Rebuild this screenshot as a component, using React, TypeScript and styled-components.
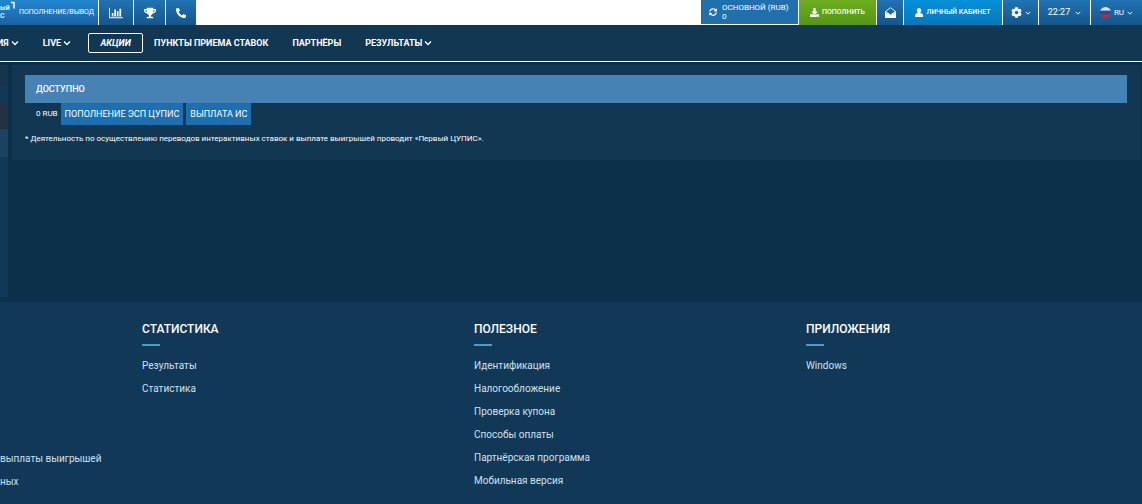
import React from "react";
import styled, { createGlobalStyle, css } from "styled-components";
import { FaCog, FaDownload, FaPhoneAlt, FaSyncAlt, FaTrophy } from "react-icons/fa";

const Global = createGlobalStyle`
  *, *::before, *::after { box-sizing: border-box; }
  body {
    margin: 0;
    background: #0d304a;
    color: #fff;
    font-family: Roboto, "Liberation Sans", sans-serif;
    font-size: 10px;
    overflow-x: hidden;
  }
  a { color: inherit; text-decoration: none; }
  button { font-family: inherit; color: inherit; border: 0; margin: 0; padding: 0; cursor: pointer; }
  ul { list-style: none; margin: 0; padding: 0; }
`;

const TopBar = styled.header`
  display: flex;
  justify-content: space-between;
  height: 25px;
  background: #fff;
`;

const Group = styled.div`
  display: flex;
  gap: 1px;
`;

type Tone = "light" | "deep" | "blue" | "green" | "cyan";

const tones: Record<Tone, string> = {
  light: "linear-gradient(#2286d0, #1b62a0)",
  deep: "linear-gradient(#2173b4, #14568a)",
  blue: "#2070ad",
  green: "linear-gradient(#6cae1d, #559615)",
  cyan: "linear-gradient(#0490da, #0877b9)",
};

const cell = css<{ $tone: Tone; $width: number }>`
  display: flex;
  align-items: center;
  justify-content: center;
  gap: 3px;
  width: ${(p) => p.$width}px;
  background: ${(p) => tones[p.$tone]};
  font-size: 7px;
  font-weight: 500;
  line-height: 9px;
  white-space: nowrap;
`;

const CellButton = styled.button<{ $tone: Tone; $width: number }>`
  ${cell}
`;

const CellLink = styled.a<{ $tone: Tone; $width: number }>`
  ${cell}
`;

const Brand = styled(CellLink)`
  justify-content: flex-start;
  gap: 5px;
  font-weight: 400;
`;

const BrandMark = styled.span`
  display: flex;
  gap: 1px;
  width: 14px;
  height: 25px;
  font-weight: 500;
  line-height: 8px;
  padding-top: 4px;
`;

const BrandDigit = styled.svg`
  width: 4px;
  height: 9px;
  margin-top: -3px;
  flex: none;
`;

const Balance = styled(CellButton)`
  justify-content: flex-start;
  gap: 5px;
  padding-left: 8px;
  border-bottom: 1px solid #fff;
  text-align: left;
`;

const BalanceText = styled.span`
  font-size: 8px;
  font-weight: 400;
`;

const Clock = styled.span`
  font-size: 9px;
  font-weight: 400;
  padding-right: 2px;
`;

const Language = styled.span`
  font-size: 8px;
  font-weight: 400;
`;

const Nav = styled.nav`
  display: flex;
  align-items: center;
  height: 37px;
  margin-left: -3px;
  padding-bottom: 1px;
  background: #113753;
  border-bottom: 1px solid #fff;
  overflow: hidden;
`;

const NavItem = styled.a`
  display: flex;
  align-items: center;
  gap: 2px;
  margin-right: 24px;
  font-size: 9px;
  line-height: 12px;
  font-weight: 700;
  white-space: nowrap;
`;

const NavPromo = styled(NavItem)`
  justify-content: center;
  width: 55px;
  height: 20px;
  margin-left: -7px;
  margin-right: 11px;
  border: 1px solid #fff;
  border-radius: 2px;
  font-style: italic;
`;

const Body = styled.div`
  display: grid;
  grid-template-columns: 8px 1fr;
  column-gap: 4px;
  min-height: 240px;
  padding: 3px 1px 5px 0;
`;

const Aside = styled.aside`
  display: flex;
  flex-direction: column;
  background: #113857;
`;

const AsideBand = styled.div<{ $height: number; $color: string }>`
  height: ${(p) => p.$height}px;
  background: ${(p) => p.$color};
`;

const Panel = styled.main`
  align-self: start;
  padding: 10px 14px 15px 13px;
  background: #113753;
`;

const PanelTitle = styled.h1`
  margin: 0;
  padding: 8px 11px;
  background: #4782b5;
  font-size: 9px;
  line-height: 12px;
  font-weight: 500;
`;

const Payments = styled.div`
  display: flex;
  align-items: center;
  gap: 3px;
  padding-left: 11px;
`;

const Amount = styled.span`
  font-size: 8px;
  line-height: 12px;
`;

const PayButton = styled.button`
  height: 22px;
  padding: 0 4px;
  background: #1c70b0;
  font-size: 9px;
  line-height: 12px;
`;

const Note = styled.p`
  margin: 8px 0 0;
  font-size: 8px;
  line-height: 12px;
`;

const Footer = styled.footer`
  display: grid;
  grid-template-columns: 142px repeat(3, 1fr);
  padding: 20px 4px 16px 0;
  background: #113856;
  min-height: 202px;
`;

const Column = styled.section`
  display: flex;
  flex-direction: column;
`;

const ClippedColumn = styled(Column)`
  justify-content: flex-end;
`;

const ColumnTitle = styled.h2`
  margin: 0 0 13px;
  font-size: 12px;
  line-height: 14px;
  font-weight: 500;

  &::after {
    content: "";
    display: block;
    width: 18px;
    height: 2px;
    margin-top: 8px;
    background: #519bcb;
  }
`;

const Links = styled.ul`
  color: #cfe0ee;
  font-size: 10px;
  line-height: 13px;
`;

const LinkItem = styled.li`
  & + & { margin-top: 10px; }
`;

const Chevron = ({ size = 8 }: { size?: number }) => (
  <svg width={size} height={size} viewBox="0 0 8 8" fill="none" stroke="currentColor" strokeWidth="1.3" aria-hidden="true">
    <path d="M1 2.5 4 5.5 7 2.5" />
  </svg>
);

const BarChart = () => (
  <svg width="14" height="12" viewBox="0 0 2048 1792" fill="currentColor" aria-hidden="true">
    <path d="M640 896v512H384V896h256zm384-512v1024H768V384h256zm1024 1152v128H0V128h128v1408h1920zm-640-896v768h-256V640h256zm384-384v1152h-256V256h256z" />
  </svg>
);

const Person = () => (
  <svg width="8" height="9" viewBox="0 0 8 9" fill="currentColor" aria-hidden="true">
    <ellipse cx="4" cy="2.6" rx="2.2" ry="2.6" />
    <path d="M0 9V7.6C0 6.2 1 5.4 2.3 5h3.4C7 5.4 8 6.2 8 7.6V9z" />
  </svg>
);

const OpenEnvelope = () => (
  <svg width="11" height="11" viewBox="0 0 11 11" aria-hidden="true">
    <path d="M.5 4.5 5.5.7l5 3.8-5 3.4z" fill="none" stroke="#fff" strokeWidth=".9" />
    <path d="M0 4.6 5.5 8.3 11 4.6V11H0z" fill="#fff" />
  </svg>
);

const Flag = () => (
  <svg width="11" height="11" viewBox="0 0 12 12" aria-hidden="true">
    <clipPath id="flag-disc"><circle cx="6" cy="6" r="6" /></clipPath>
    <g clipPath="url(#flag-disc)">
      <path d="M0 0h12v4H0z" fill="#dfe4ec" />
      <path d="M0 4h12v4H0z" fill="#1c50b0" />
      <path d="M0 8h12v4H0z" fill="#c0283a" />
    </g>
  </svg>
);

const columns = [
  { title: "СТАТИСТИКА", links: ["Результаты", "Статистика"] },
  {
    title: "ПОЛЕЗНОЕ",
    links: ["Идентификация", "Налогообложение", "Проверка купона", "Способы оплаты", "Партнёрская программа", "Мобильная версия"],
  },
  { title: "ПРИЛОЖЕНИЯ", links: ["Windows"] },
];

const LinkList = ({ links }: { links: string[] }) => (
  <Links>
    {links.map((l) => (
      <LinkItem key={l}><a href="#">{l}</a></LinkItem>
    ))}
  </Links>
);

export default function App() {
  return (
    <>
      <Global />
      <TopBar>
        <Group>
          <Brand href="#" $tone="light" $width={98}>
            <BrandMark>
              <span>ый<br />С</span>
              <BrandDigit viewBox="0 0 4 9" fill="none" stroke="#fff" strokeWidth="1.5"><path d="M0 1.5h3v6" /></BrandDigit>
            </BrandMark>
            ПОПОЛНЕНИЕ/ВЫВОД
          </Brand>
          <CellLink href="#" $tone="deep" $width={34} aria-label="Статистика"><BarChart /></CellLink>
          <CellLink href="#" $tone="deep" $width={31} aria-label="Результаты"><FaTrophy size={12} /></CellLink>
          <CellLink href="#" $tone="deep" $width={30} aria-label="Телефон"><FaPhoneAlt size={10} /></CellLink>
        </Group>
        <Group>
          <Balance $tone="blue" $width={97}>
            <FaSyncAlt size={8} />
            <BalanceText>ОСНОВНОЙ (RUB)<br />0</BalanceText>
          </Balance>
          <CellLink href="#" $tone="green" $width={77}><FaDownload size={9} />ПОПОЛНИТЬ</CellLink>
          <CellLink href="#" $tone="deep" $width={26} aria-label="Сообщения"><OpenEnvelope /></CellLink>
          <CellLink href="#" $tone="cyan" $width={98}><Person />ЛИЧНЫЙ КАБИНЕТ</CellLink>
          <CellButton $tone="deep" $width={35} aria-label="Настройки"><FaCog size={11} /><Chevron size={6} /></CellButton>
          <CellButton $tone="deep" $width={51}><Clock>22:27</Clock><Chevron size={6} /></CellButton>
          <CellButton $tone="deep" $width={51}><Flag /><Language>RU</Language><Chevron size={6} /></CellButton>
        </Group>
      </TopBar>
      <Nav>
        <NavItem href="#">ИЯ<Chevron /></NavItem>
        <NavItem href="#">LIVE<Chevron /></NavItem>
        <NavPromo href="#">АКЦИИ</NavPromo>
        <NavItem href="#">ПУНКТЫ ПРИЕМА СТАВОК</NavItem>
        <NavItem href="#">ПАРТНЁРЫ</NavItem>
        <NavItem href="#">РЕЗУЛЬТАТЫ<Chevron /></NavItem>
      </Nav>
      <Body>
        <Aside>
          <AsideBand $height={20} $color="#18344a" />
          <AsideBand $height={18} $color="#113857" />
          <AsideBand $height={26} $color="#203244" />
          <AsideBand $height={28} $color="#1b435f" />
        </Aside>
        <Panel>
          <PanelTitle>ДОСТУПНО</PanelTitle>
          <Payments>
            <Amount>0 RUB</Amount>
            <PayButton>ПОПОЛНЕНИЕ ЭСП ЦУПИС</PayButton>
            <PayButton>ВЫПЛАТА ИС</PayButton>
          </Payments>
          <Note>* Деятельность по осуществлению переводов интерактивных ставок и выплате выигрышей проводит <a href="#">«Первый ЦУПИС»</a>.</Note>
        </Panel>
      </Body>
      <Footer>
        <ClippedColumn>
          <LinkList links={["выплаты выигрышей", "ных"]} />
        </ClippedColumn>
        {columns.map((c) => (
          <Column key={c.title}>
            <ColumnTitle>{c.title}</ColumnTitle>
            <LinkList links={c.links} />
          </Column>
        ))}
      </Footer>
    </>
  );
}
